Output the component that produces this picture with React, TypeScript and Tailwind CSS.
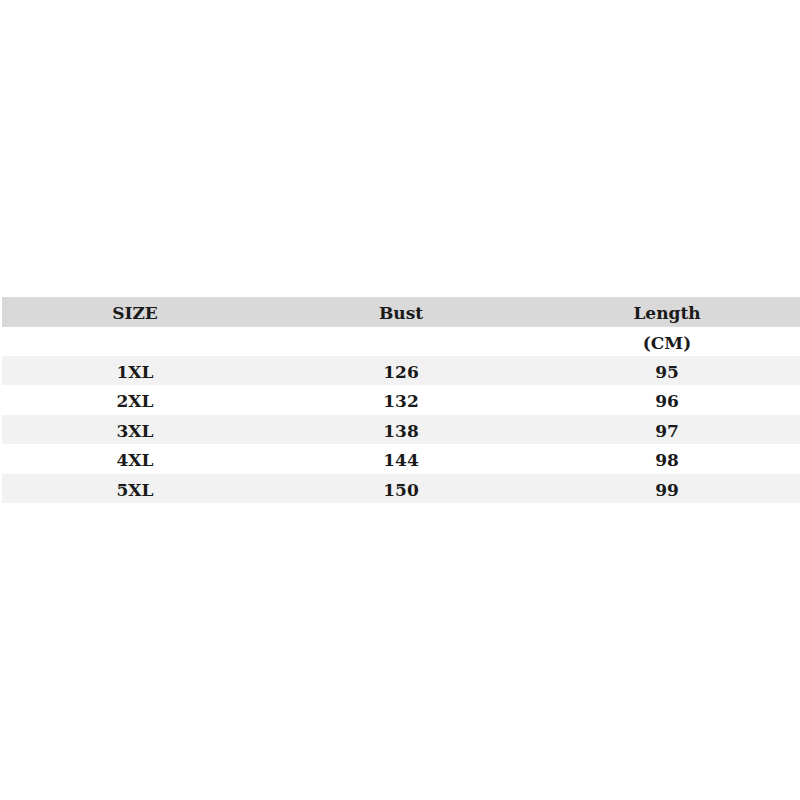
const rows = [
  { size: "1XL", bust: "126", length: "95" },
  { size: "2XL", bust: "132", length: "96" },
  { size: "3XL", bust: "138", length: "97" },
  { size: "4XL", bust: "144", length: "98" },
  { size: "5XL", bust: "150", length: "99" },
];

const App = () => {
  return (
    <div
      className="w-full h-[800px] bg-white flex items-center pl-[2px] text-[#1a1a1a] font-bold text-[17px]"
      style={{ fontFamily: '"DejaVu Serif", "Liberation Serif", serif' }}
    >
      <div className="w-full">
        {/* header */}
        <div className="grid grid-cols-3 h-[29.5px] pt-[4px] bg-[#d9d9d9] items-center text-center">
          <span>SIZE</span>
          <span>Bust</span>
          <span>Length</span>
        </div>
        <div className="grid grid-cols-3 h-[29.5px] pt-[4px] items-center text-center">
          <span></span>
          <span></span>
          <span>(CM)</span>
        </div>
        {rows.map((r, i) => (
          <div
            key={r.size}
            className={`grid grid-cols-3 h-[29.4px] pt-[4px] items-center text-center ${i % 2 === 0 ? "bg-[#f2f2f2]" : "bg-white"}`}
          >
            <span>{r.size}</span>
            <span>{r.bust}</span>
            <span>{r.length}</span>
          </div>
        ))}
      </div>
    </div>
  );
};

export default App;
